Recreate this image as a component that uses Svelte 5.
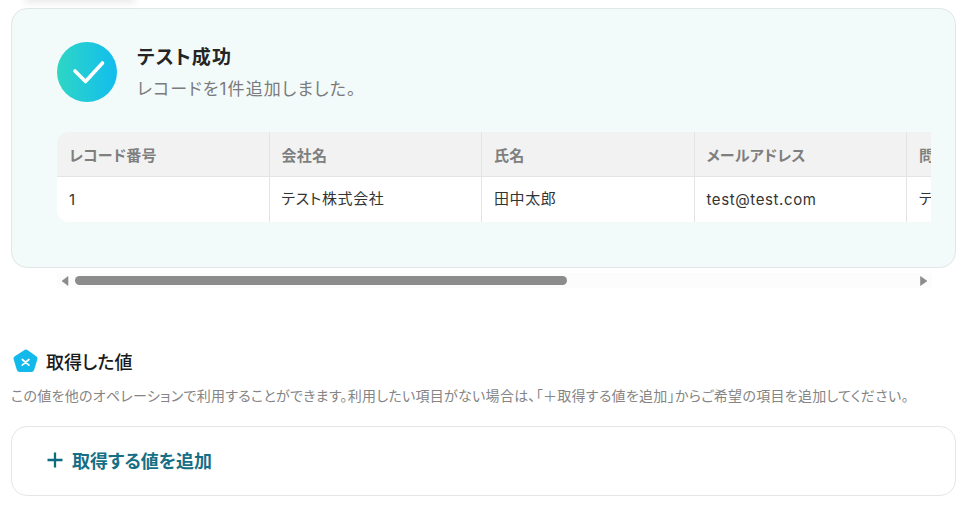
<script>
  const cols = ['レコード番号', '会社名', '氏名', 'メールアドレス', '問い合わせ内容'];
  const row = [
    { text: '1', latin: true },
    { text: 'テスト株式会社', latin: false },
    { text: '田中太郎', latin: false },
    { text: 'test@test.com', latin: true },
    { text: 'テスト', latin: false }
  ];
</script>

<div class="page">
  <div class="shadow"></div>
  <section class="result">
    <div class="head">
      <div class="badge">
        <svg width="60" height="60" viewBox="0 0 60 60" fill="none">
          <path d="M18 29 L28.500 39.500 L45.500 21" stroke="#fff" stroke-width="3.6" stroke-linecap="round" stroke-linejoin="round" />
        </svg>
      </div>
      <div class="msg">
        <h2>テスト成功</h2>
        <p>レコードを1件追加しました。</p>
      </div>
    </div>
    <div class="clip">
      <div class="table">
        {#each cols as c}<div class="cell th">{c}</div>{/each}
        {#each row as c}<div class="cell td" class:latin={c.latin}>{c.text}</div>{/each}
      </div>
    </div>
  </section>

  <div class="scrollbar">
    <svg class="arrow" width="8" height="10" viewBox="0 0 8 10"><path d="M7 0.5V9.500L1 5Z" fill="#8c8c8c" stroke="#8c8c8c" stroke-width="0.6" /></svg>
    <div class="track"><div class="thumb"></div></div>
    <svg class="arrow" width="8" height="10" viewBox="0 0 8 10"><path d="M0.500 0.500V9.500L7 5Z" fill="#8c8c8c" stroke="#8c8c8c" stroke-width="0.6" /></svg>
  </div>

  <div class="title">
    <svg width="26" height="26" viewBox="0 0 26 26">
      <path d="M11.200 1.200a3 3 0 0 1 3.600 0l8.400 6a3 3 0 0 1 1.100 3.400l-3.100 10.200a3 3 0 0 1-2.900 2.200H6.700a3 3 0 0 1-2.900-2.200L.7 10.600a3 3 0 0 1 1.100-3.400z" fill="#12b9ea" />
      <path d="M9.300 10.500l6.600 5.600M15.900 10.500l-6.600 5.600" stroke="#fff" stroke-width="1.700" stroke-linecap="round" />
    </svg>
    <h3>取得した値</h3>
  </div>
  <p class="note">この値を他のオペレーションで利用することができます。利用したい項目がない場合は、「＋取得する値を追加」からご希望の項目を追加してください。</p>

  <div class="add">
    <svg width="16" height="16" viewBox="0 0 16 16"><path d="M8 0.500v15M0.500 8h15" stroke="#0f6a80" stroke-width="2.300" /></svg>
    <span>取得する値を追加</span>
  </div>
</div>

<style>
  :global(body) {
    margin: 0;
    background: #fff;
  }
  .page {
    position: relative;
    width: 945px;
    height: 514px;
    box-sizing: border-box;
    margin-left: 11px;
    padding-top: 8px;
    overflow: hidden;
    font-family: Inter, "Noto Sans CJK JP", sans-serif;
    font-feature-settings: "palt";
  }
  .shadow {
    position: absolute;
    left: 14px;
    top: -16px;
    width: 110px;
    height: 16px;
    box-shadow: 0 2px 8px rgba(0, 0, 0, 0.1);
  }
  .result {
    height: 260px;
    box-sizing: border-box;
    background: #f2fafa;
    border: 1px solid #e2e6e6;
    border-radius: 16px;
    padding: 33px 24px 0 45px;
  }
  .head {
    display: flex;
    gap: 20px;
  }
  .badge {
    width: 60px;
    height: 60px;
    border-radius: 50%;
    background: linear-gradient(90deg, #2ed6c4, #12bdee);
  }
  .badge svg {
    display: block;
  }
  .msg h2 {
    margin: 0;
    padding-top: 3px;
    font-size: 19px;
    line-height: 26px;
    font-weight: 700;
    letter-spacing: 0.06em;
    color: #252525;
  }
  .msg p {
    margin: 6px 0 0;
    font-size: 17px;
    line-height: 24px;
    letter-spacing: 0.065em;
    color: #7b7b7b;
  }
  .clip {
    margin-top: 30px;
    overflow: hidden;
    border-radius: 12px 0 0 12px;
  }
  .table {
    display: grid;
    grid-template-columns: repeat(5, 212.5px);
    grid-template-rows: 45px 45px;
    width: 1062.5px;
  }
  .cell {
    box-sizing: border-box;
    padding: 0 12px;
    display: flex;
    align-items: center;
    border-right: 1px solid #e4e4e4;
    font-size: 15px;
    letter-spacing: 0.04em;
    white-space: nowrap;
  }
  .th {
    background: #f2f2f2;
    border-bottom: 1px solid #e4e4e4;
    color: #7f7f7f;
    font-weight: 700;
    letter-spacing: 0.015em;
  }
  .td {
    background: #fff;
    color: #333;
    padding-bottom: 4px;
  }
  .td.latin {
    padding-bottom: 1px;
  }
  .scrollbar {
    display: flex;
    align-items: center;
    height: 15px;
    margin: 5px 24px 0 46px;
    background: #fcfcfc;
    padding: 0 4px;
    gap: 6px;
  }
  .track {
    flex: 1;
  }
  .thumb {
    width: 492px;
    height: 9px;
    border-radius: 5px;
    background: #8c8c8c;
  }
  .title {
    display: flex;
    align-items: center;
    gap: 7px;
    margin-top: 61px;
    margin-left: 2px;
  }
  h3 {
    margin: 0;
    padding-top: 2px;
    font-size: 18px;
    line-height: 24px;
    font-weight: 500;
    color: #1a1a1a;
  }
  .note {
    margin: 11px 0 0;
    font-size: 14px;
    line-height: 20px;
    letter-spacing: 0.02em;
    color: #858585;
    white-space: nowrap;
  }
  .add {
    margin-top: 20px;
    height: 70px;
    box-sizing: border-box;
    border: 1px solid #e6e6e6;
    border-radius: 16px;
    padding-left: 35px;
    padding-bottom: 3px;
    display: flex;
    align-items: center;
    gap: 9px;
    font-size: 18px;
    font-weight: 700;
    color: #176f86;
  }
</style>
